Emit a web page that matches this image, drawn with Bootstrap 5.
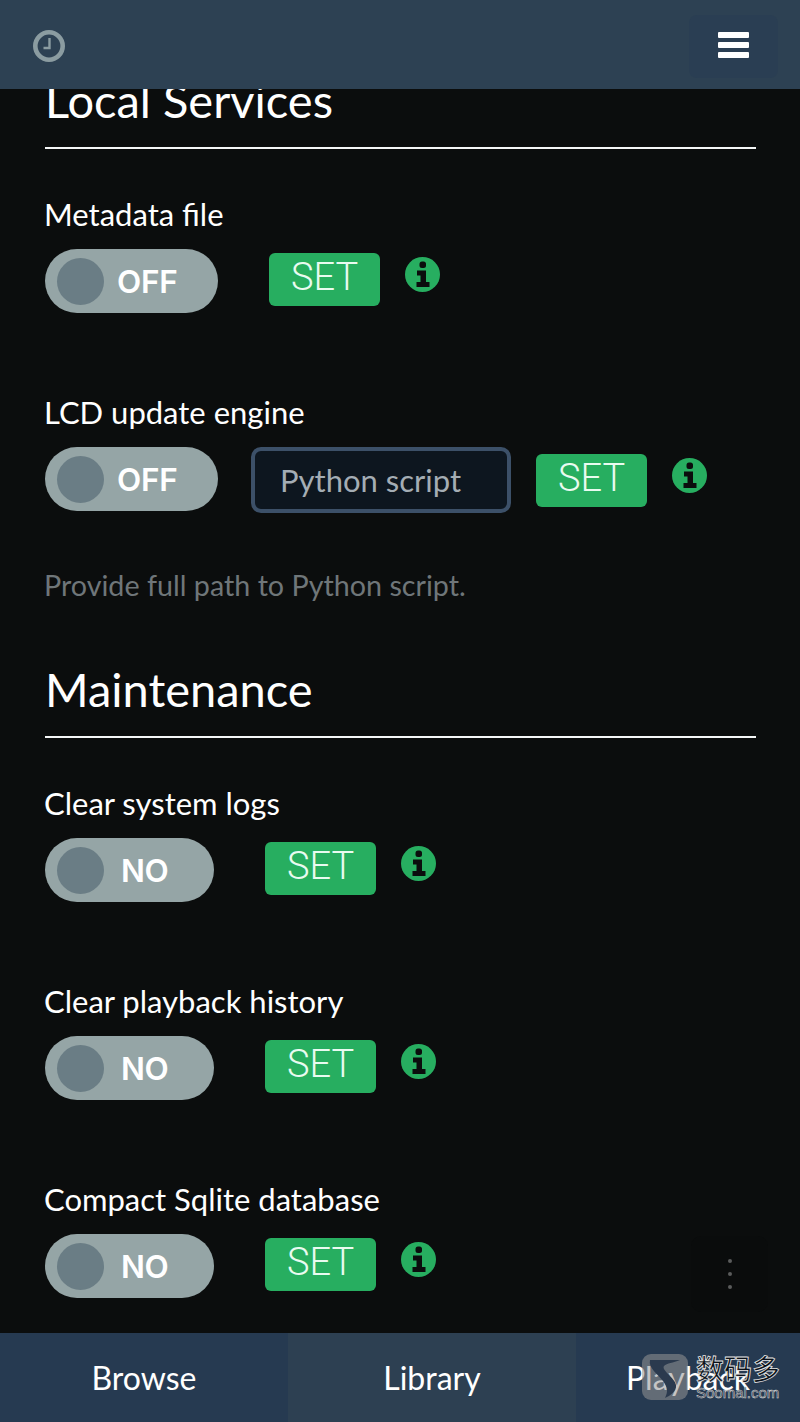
<!DOCTYPE html>
<html lang="en">
<head>
<meta charset="utf-8">
<title>Local Services</title>
<link href="https://cdn.jsdelivr.net/npm/bootstrap@5.3.0/dist/css/bootstrap.min.css" rel="stylesheet">
<style>
html,body{height:1422px;}
body{width:800px;background:#0b0d0d;color:#fff;font-family:Lato,"Liberation Sans",sans-serif;overflow:hidden;}
.top-bar{height:89px;background:#2d4153;padding:15px 22px 11px 33px;flex:none;position:relative;z-index:2;}
.clock-ico{margin-top:15px;}
.menu-btn{width:89px;height:63px;background:#2a3e53;border:0;border-radius:8px;padding:17px 29px 20px;}
.menu-btn span{display:block;height:6px;background:#fff;border-radius:1px;margin-bottom:4px;}
.page{flex:1 1 auto;min-height:0;padding:0 44px 0 45px;overflow:hidden;position:relative;}
.sect-title{font-size:47px;line-height:52px;font-weight:400;margin:0 0 0;padding-bottom:21px;border-bottom:2px solid #f4f6f6;}
.sect-first{margin-top:-15px;}
.sect-next{margin-top:60px;}
.opt-label{font-size:31px;line-height:35px;margin:0 0 17px -1px;}
.opt-top{margin-top:48px;}
.opt-gap{margin-top:82px;}
.switcher{height:64px;border-radius:32px;background:#95a5a6;padding-left:12px;font-family:Inter,Lato,sans-serif;font-size:31.5px;font-weight:600;flex:none;}
.sw-off{width:173px;gap:13px;}
.sw-no{width:169px;gap:17px;}
.sw-knob{width:47px;height:47px;border-radius:50%;background:#6a7d85;flex:none;}
.sw-text{line-height:1;margin-top:2px;letter-spacing:-.3px;}
.set-btn{width:111px;height:53px;background:#27ae60;color:#e9fbf0;border:0;border-radius:6px;font-family:Roboto,Inter,sans-serif;font-size:38px;font-weight:300;line-height:48px;padding:0 0 5px;flex:none;}
.set-a{margin-left:51px;margin-top:4px;}
.set-b{margin-left:25px;margin-top:7px;}
.info-ico{width:35px;height:35px;flex:none;margin-left:25px;margin-top:8px;}
.info-b{margin-top:11px;}
.path-input{width:260px;height:66px;background:#0d161f;border:4px solid #3c5068;border-radius:10px;margin-left:33px;padding:0 25px;font-size:31px;color:#a4adb4;line-height:56px;flex:none;}
.path-input::placeholder{color:#a4adb4;opacity:1;}
.path-input:focus{outline:0;}
.help-line{font-size:28.7px;line-height:36px;color:#6f7679;margin:54px 0 0 -1px;}
.dots-btn{position:absolute;right:32px;top:1147px;width:77px;height:76px;background:#0a0c0c;border-radius:10px;border:0;}
.dots-btn i{display:block;width:4px;height:4px;border-radius:50%;background:#5a5c5c;margin:0 auto 9px;}
.bottom-bar{height:89px;flex:none;background:#263a51;position:relative;z-index:2;}
.tab-item{width:288px;flex:none;font-size:32px;line-height:89px;text-align:center;color:#fff;text-decoration:none;}
.tab-mid{background:#2d4052;}
.tab-last{width:224px;}
.mark-box{position:absolute;left:642px;top:1354px;width:46px;height:46px;border-radius:9px;background:rgba(150,150,150,.55);z-index:3;}
.mark-cn{position:absolute;left:696px;top:1349px;font-family:"Noto Sans CJK SC",sans-serif;font-size:28px;font-weight:500;line-height:38px;color:rgba(8,12,18,.92);-webkit-text-stroke:.8px #e8e8e8;z-index:3;}
.mark-en{position:absolute;left:696px;top:1384px;font-family:"Liberation Sans",sans-serif;font-size:15px;line-height:18px;color:#2a3444;-webkit-text-stroke:.5px #ddd;z-index:3;}
</style>
</head>
<body class="d-flex flex-column">
<header class="top-bar d-flex justify-content-between align-items-start">
  <svg class="clock-ico" width="32" height="32" viewBox="0 0 32 32" aria-hidden="true">
    <circle cx="16" cy="16" r="13.700" fill="none" stroke="#8b9ca1" stroke-width="4.600"/>
    <path d="M16.500 8v10h-6" fill="none" stroke="#8b9ca1" stroke-width="2.400"/>
  </svg>
  <button class="menu-btn" type="button" aria-label="Menu"><span></span><span></span><span></span></button>
</header>

<main class="page">
  <h2 class="sect-title sect-first">Local Services</h2>

  <div class="opt-top">
    <p class="opt-label">Metadata file</p>
    <div class="d-flex align-items-start">
      <div class="switcher sw-off d-flex align-items-center"><span class="sw-knob"></span><span class="sw-text">OFF</span></div>
      <button class="set-btn set-a" type="button">SET</button>
      <svg class="info-ico" viewBox="0 0 35 35" aria-hidden="true"><circle cx="17.5" cy="17.5" r="17.5" fill="#27ae60"/><rect x="14.500" y="4.500" width="6.500" height="6.500" rx="2.500" fill="#0b0d0d"/><path d="M12 13.500H21V25h3.500v5H11.500v-5h4V18.500H12z" fill="#0b0d0d"/></svg>
    </div>
  </div>

  <div class="opt-gap">
    <p class="opt-label">LCD update engine</p>
    <div class="d-flex align-items-start">
      <div class="switcher sw-off d-flex align-items-center"><span class="sw-knob"></span><span class="sw-text">OFF</span></div>
      <input class="path-input" type="text" placeholder="Python script" aria-label="Python script">
      <button class="set-btn set-b" type="button">SET</button>
      <svg class="info-ico info-b" viewBox="0 0 35 35" aria-hidden="true"><circle cx="17.5" cy="17.5" r="17.5" fill="#27ae60"/><rect x="14.500" y="4.500" width="6.500" height="6.500" rx="2.500" fill="#0b0d0d"/><path d="M12 13.500H21V25h3.500v5H11.500v-5h4V18.500H12z" fill="#0b0d0d"/></svg>
    </div>
    <p class="help-line">Provide full path to Python script.</p>
  </div>

  <h2 class="sect-title sect-next">Maintenance</h2>

  <div class="opt-top">
    <p class="opt-label">Clear system logs</p>
    <div class="d-flex align-items-start">
      <div class="switcher sw-no d-flex align-items-center"><span class="sw-knob"></span><span class="sw-text">NO</span></div>
      <button class="set-btn set-a" type="button">SET</button>
      <svg class="info-ico" viewBox="0 0 35 35" aria-hidden="true"><circle cx="17.5" cy="17.5" r="17.5" fill="#27ae60"/><rect x="14.500" y="4.500" width="6.500" height="6.500" rx="2.500" fill="#0b0d0d"/><path d="M12 13.500H21V25h3.500v5H11.500v-5h4V18.500H12z" fill="#0b0d0d"/></svg>
    </div>
  </div>

  <div class="opt-gap">
    <p class="opt-label">Clear playback history</p>
    <div class="d-flex align-items-start">
      <div class="switcher sw-no d-flex align-items-center"><span class="sw-knob"></span><span class="sw-text">NO</span></div>
      <button class="set-btn set-a" type="button">SET</button>
      <svg class="info-ico" viewBox="0 0 35 35" aria-hidden="true"><circle cx="17.5" cy="17.5" r="17.5" fill="#27ae60"/><rect x="14.500" y="4.500" width="6.500" height="6.500" rx="2.500" fill="#0b0d0d"/><path d="M12 13.500H21V25h3.500v5H11.500v-5h4V18.500H12z" fill="#0b0d0d"/></svg>
    </div>
  </div>

  <div class="opt-gap">
    <p class="opt-label">Compact Sqlite database</p>
    <div class="d-flex align-items-start">
      <div class="switcher sw-no d-flex align-items-center"><span class="sw-knob"></span><span class="sw-text">NO</span></div>
      <button class="set-btn set-a" type="button">SET</button>
      <svg class="info-ico" viewBox="0 0 35 35" aria-hidden="true"><circle cx="17.5" cy="17.5" r="17.5" fill="#27ae60"/><rect x="14.500" y="4.500" width="6.500" height="6.500" rx="2.500" fill="#0b0d0d"/><path d="M12 13.500H21V25h3.500v5H11.500v-5h4V18.500H12z" fill="#0b0d0d"/></svg>
    </div>
  </div>

  <button class="dots-btn d-flex flex-column justify-content-center align-items-center" type="button" aria-label="More"><i></i><i></i><i class="mb-0"></i></button>
</main>

<nav class="bottom-bar d-flex">
  <a class="tab-item" href="#">Browse</a>
  <a class="tab-item tab-mid" href="#">Library</a>
  <a class="tab-item tab-last" href="#">Playback</a>
</nav>

<div class="mark-box"><svg width="46" height="46" viewBox="0 0 46 46" aria-hidden="true"><path d="M8 6h30c-7 3-13 3-16 6-3 4 11 12 12 19 1 6-6 11-11 13 3-6 3-10-2-17C16 20 6 14 8 6z" fill="#2b3a4e"/></svg></div>
<div class="mark-cn">数码多</div>
<div class="mark-en">Soomal.com</div>
</body>
</html>
